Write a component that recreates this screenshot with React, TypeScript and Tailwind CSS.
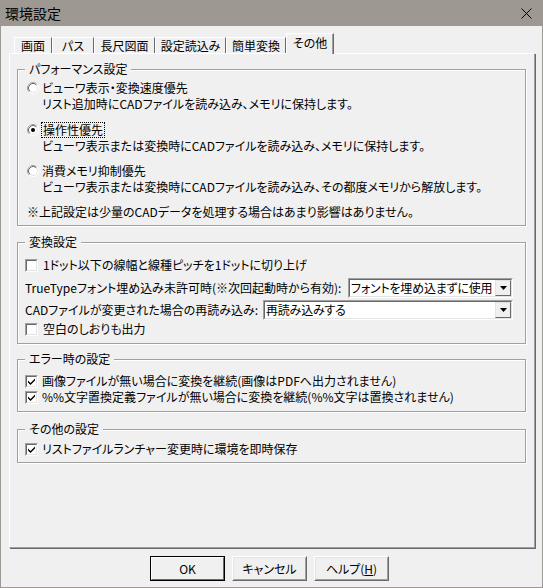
import React from "react";

function Radio({ checked }: { checked?: boolean }) {
  return (
    <svg width="12" height="12" viewBox="0 0 12 12" className="shrink-0">
      <circle cx="6" cy="6" r="5.5" fill="#fff" stroke="#fff" />
      <path d="M2.11 9.89 A5.5 5.5 0 0 1 9.89 2.11" fill="none" stroke="#a0a0a0" />
      <circle cx="6" cy="6" r="4.5" fill="#fff" stroke="#e3e3e3" />
      <path d="M2.82 9.18 A4.5 4.5 0 0 1 9.18 2.82" fill="none" stroke="#696969" />
      {checked && <circle cx="6" cy="6" r="2" fill="#000" />}
    </svg>
  );
}

function Check({ checked }: { checked?: boolean }) {
  return (
    <div className="w-[13px] h-[13px] shrink-0 border border-t-[#a0a0a0] border-l-[#a0a0a0] border-r-white border-b-white">
      <div className="w-full h-full bg-white border border-t-[#696969] border-l-[#696969] border-r-[#e3e3e3] border-b-[#e3e3e3] flex items-center justify-center">
        {checked && (
          <svg width="7" height="7" viewBox="0 0 7 7">
            <path d="M0 2.5 L2.5 5 L7 0.5 L7 2.5 L2.5 7 L0 4.5 Z" fill="#000" />
          </svg>
        )}
      </div>
    </div>
  );
}

function Combo({ className, text }: { className: string; text: string }) {
  return (
    <div className={className}>
      <div className="h-full w-full border border-t-[#a0a0a0] border-l-[#a0a0a0] border-r-white border-b-white">
        <div className="h-full w-full bg-white border border-t-[#696969] border-l-[#696969] border-r-[#e3e3e3] border-b-[#e3e3e3] flex items-stretch">
          <span className="flex-1 min-w-0 pl-[1px] flex items-center leading-[16px] whitespace-nowrap tracking-[-0.2px]">{text}</span>
          <div className="w-[16px] shrink-0 bg-[#f0f0f0] border border-t-[#e3e3e3] border-l-[#e3e3e3] border-r-[#696969] border-b-[#696969] flex items-center justify-center">
            <svg width="7" height="4" viewBox="0 0 7 4">
              <path d="M0 0 L7 0 L3.5 4 Z" fill="#000" />
            </svg>
          </div>
        </div>
      </div>
    </div>
  );
}

function Tab({ label, className }: { label: string; className: string }) {
  return (
    <div className={className}>
      <span className="leading-[14px]">{label}</span>
    </div>
  );
}

export default function App() {
  return (
    <div className="w-[543px] h-[588px] bg-[#f0f0f0] flex flex-col border-x border-b border-[#9e9893] text-[12px] text-black font-['Noto_Sans_CJK_JP','Noto_Sans',sans-serif] [font-feature-settings:'palt'] overflow-hidden select-none">
      {/* Title bar */}
      <div className="h-[26px] shrink-0 bg-[#9e9893] flex items-center justify-between pl-[4px] pr-[10px]">
        <span className="text-[14px] leading-[16px]">環境設定</span>
        <svg width="11" height="11" viewBox="0 0 11 11">
          <path d="M0.5 0.5 L10.5 10.5 M10.5 0.5 L0.5 10.5" stroke="#000" strokeWidth="1" />
        </svg>
      </div>

      <div className="flex-1 flex flex-col pl-[8px] pr-[7px]">
        {/* Tabs */}
        <div className="mt-[7px] h-[20px] flex items-end pl-[5px]">
          <Tab label="画面" className="w-[38px] h-[16px] flex items-center justify-center border-t border-l border-white border-r border-r-[#696969]" />
          <Tab label="パス" className="w-[42px] h-[16px] flex items-center justify-center border-t border-l border-white border-r border-r-[#696969]" />
          <Tab label="長尺図面" className="w-[61px] h-[16px] flex items-center justify-center border-t border-l border-white border-r border-r-[#696969]" />
          <Tab label="設定読込み" className="w-[71px] h-[16px] flex items-center justify-center border-t border-l border-white border-r border-r-[#696969]" />
          <Tab label="簡単変換" className="w-[60px] h-[16px] flex items-center justify-center border-t border-l border-white border-r border-r-[#696969]" />
          <Tab label="その他" className="relative z-10 -mb-[1px] w-[48px] h-[21px] bg-[#f0f0f0] flex items-start justify-center pt-[2px] border-t border-l border-white border-r border-r-[#696969] shadow-[inset_-1px_0_0_#a0a0a0]" />
        </div>

        {/* Panel */}
        <div className="h-[495px] shrink-0 border border-t-white border-l-white border-r-[#a0a0a0] border-b-[#a0a0a0] shadow-[1px_1px_0_#696969] pl-[7px] pr-[8px] pt-[7px] flex flex-col">
          {/* Group 1 */}
          <fieldset className="border border-[#a0a0a0] shadow-[1px_1px_0_#fff,inset_1px_1px_0_#fff] pb-[5px]">
            <legend className="ml-[7px] px-[4px] leading-[16px] bg-[#f0f0f0]">パフォーマンス設定</legend>
            <div className="pt-[3px] pl-[9px] flex flex-col">
              <div className="h-[16px] flex items-center gap-[3px]">
                <Radio />
                <span className="leading-[16px]">ビューワ表示・変換速度優先</span>
              </div>
              <div className="h-[16px] pl-[15px] leading-[16px] whitespace-nowrap">リスト追加時にCADファイルを読み込み、メモリに保持します。</div>
              <div className="mt-[10px] h-[16px] flex items-center gap-[2px]">
                <Radio checked />
                <span className="leading-[14px] border border-dotted border-black px-[1px]">操作性優先</span>
              </div>
              <div className="h-[16px] pl-[15px] leading-[16px] whitespace-nowrap">ビューワ表示または変換時にCADファイルを読み込み、メモリに保持します。</div>
              <div className="mt-[9px] h-[16px] flex items-center gap-[3px]">
                <Radio />
                <span className="leading-[16px]">消費メモリ抑制優先</span>
              </div>
              <div className="h-[16px] pl-[15px] leading-[16px] whitespace-nowrap">ビューワ表示または変換時にCADファイルを読み込み、その都度メモリから解放します。</div>
              <div className="mt-[9px] h-[16px] leading-[16px] whitespace-nowrap">※上記設定は少量のCADデータを処理する場合はあまり影響はありません。</div>
            </div>
          </fieldset>

          {/* Group 2 */}
          <fieldset className="mt-[8px] border border-[#a0a0a0] shadow-[1px_1px_0_#fff,inset_1px_1px_0_#fff] pb-[6px]">
            <legend className="ml-[7px] px-[4px] leading-[16px] bg-[#f0f0f0]">変換設定</legend>
            <div className="pt-[7px] pl-[7px] pr-[12px] flex flex-col">
              <div className="h-[16px] flex items-center gap-[5px]">
                <Check />
                <span className="leading-[16px]">1ドット以下の線幅と線種ピッチを1ドットに切り上げ</span>
              </div>
              <div className="mt-[5px] h-[20px] flex items-center">
                <span className="leading-[16px] whitespace-nowrap">TrueTypeフォント埋め込み未許可時(※次回起動時から有効):</span>
                <Combo className="ml-auto w-[165px] h-[20px] shrink-0" text="フォントを埋め込まずに使用" />
              </div>
              <div className="mt-[2px] h-[20px] flex items-center">
                <span className="leading-[16px] whitespace-nowrap">CADファイルが変更された場合の再読み込み:</span>
                <Combo className="ml-auto w-[250px] h-[20px] shrink-0" text="再読み込みする" />
              </div>
              <div className="mt-[1px] h-[16px] flex items-center gap-[5px]">
                <Check />
                <span className="leading-[16px]">空白のしおりも出力</span>
              </div>
            </div>
          </fieldset>

          {/* Group 3 */}
          <fieldset className="mt-[7px] border border-[#a0a0a0] shadow-[1px_1px_0_#fff,inset_1px_1px_0_#fff] pb-[6px]">
            <legend className="ml-[7px] px-[4px] leading-[16px] bg-[#f0f0f0]">エラー時の設定</legend>
            <div className="pt-[6px] pl-[7px] flex flex-col">
              <div className="h-[16px] flex items-center gap-[4px]">
                <Check checked />
                <span className="leading-[16px] whitespace-nowrap">画像ファイルが無い場合に変換を継続(画像はPDFへ出力されません)</span>
              </div>
              <div className="h-[16px] flex items-center gap-[4px]">
                <Check checked />
                <span className="leading-[16px] whitespace-nowrap">%%文字置換定義ファイルが無い場合に変換を継続(%%文字は置換されません)</span>
              </div>
            </div>
          </fieldset>

          {/* Group 4 */}
          <fieldset className="mt-[9px] border border-[#a0a0a0] shadow-[1px_1px_0_#fff,inset_1px_1px_0_#fff] pb-[5px]">
            <legend className="ml-[7px] px-[4px] leading-[16px] bg-[#f0f0f0]">その他の設定</legend>
            <div className="pt-[4px] pl-[7px] flex flex-col">
              <div className="h-[16px] flex items-center gap-[4px]">
                <Check checked />
                <span className="leading-[16px] whitespace-nowrap">リストファイルランチャー変更時に環境を即時保存</span>
              </div>
            </div>
          </fieldset>
        </div>

        {/* Buttons */}
        <div className="mt-[8px] flex gap-[7px] pl-[141px]">
          <button className="w-[75px] h-[25px] border border-black bg-[#f0f0f0] font-normal">
            <div className="w-full h-full border border-t-white border-l-white border-r-[#696969] border-b-[#696969] flex items-center justify-center leading-[14px]">OK</div>
          </button>
          <button className="w-[75px] h-[25px] border border-t-white border-l-white border-r-[#696969] border-b-[#696969] bg-[#f0f0f0]">
            <div className="w-full h-full border border-t-[#e3e3e3] border-l-[#e3e3e3] border-r-[#a0a0a0] border-b-[#a0a0a0] flex items-center justify-center leading-[14px]">キャンセル</div>
          </button>
          <button className="w-[75px] h-[25px] border border-t-white border-l-white border-r-[#696969] border-b-[#696969] bg-[#f0f0f0]">
            <div className="w-full h-full border border-t-[#e3e3e3] border-l-[#e3e3e3] border-r-[#a0a0a0] border-b-[#a0a0a0] flex items-center justify-center leading-[14px]">
              ヘルプ(<span className="underline">H</span>)
            </div>
          </button>
        </div>
      </div>
    </div>
  );
}
